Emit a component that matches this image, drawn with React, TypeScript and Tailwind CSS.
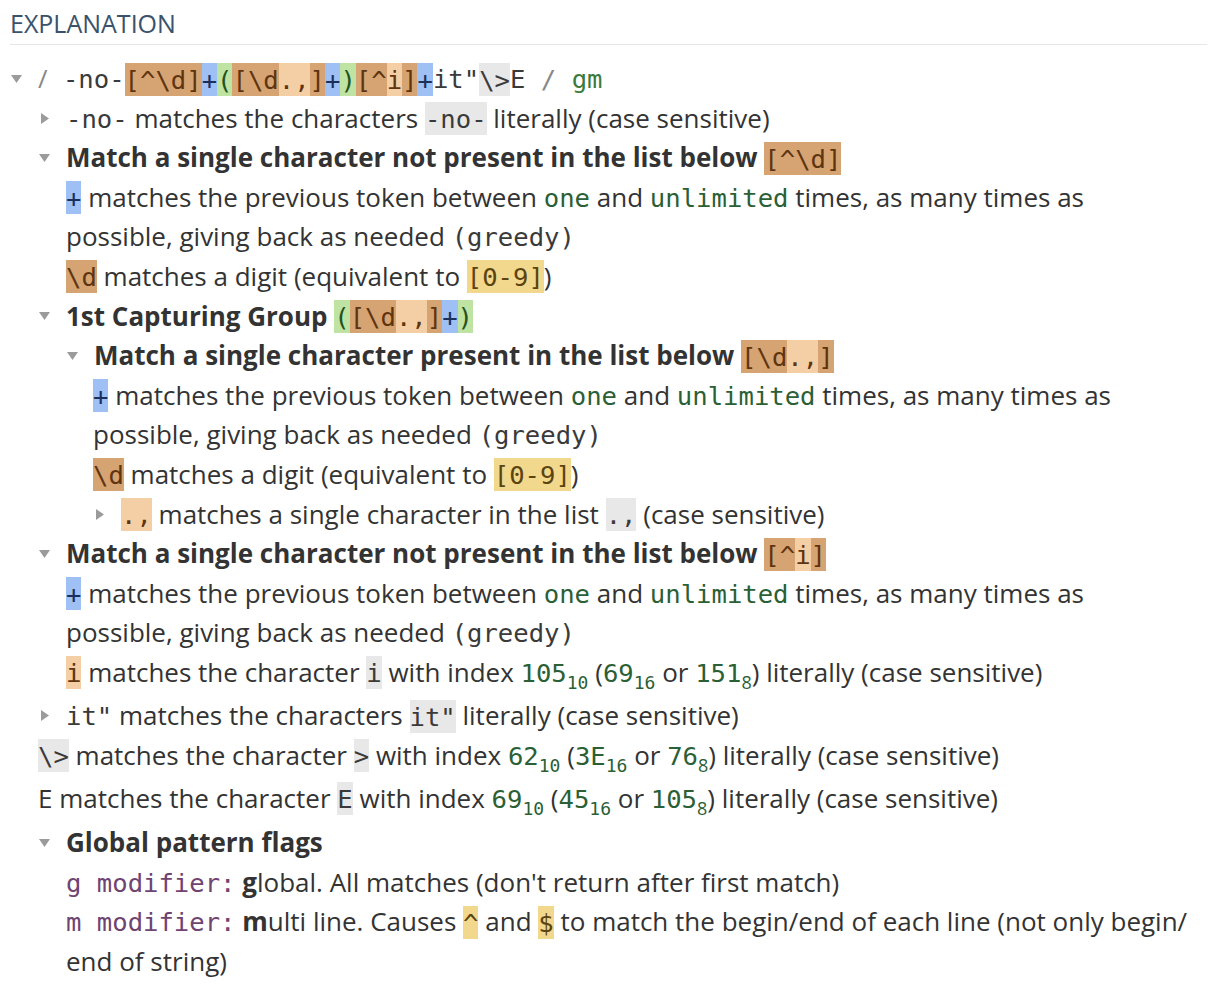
import React from 'react';

const MONO = "font-['DejaVu_Sans_Mono',monospace] text-[25.6px] leading-none";

const TONES = {
  dark: 'bg-[#d6a372] text-[#5e3510]',
  light: 'bg-[#f4cfa6] text-[#5e3510]',
  blue: 'bg-[#9ec0f5] text-[#1a2f5a]',
  green: 'bg-[#bfe3a3] text-[#24521e]',
  yellow: 'bg-[#f2d88d] text-[#5a4410]',
  gray: 'bg-[#e8e8e8] text-[#3a3a3a]',
};

type Tone = keyof typeof TONES;

// highlighted regex token; padding on an inline span paints the box without growing the line
const Tok = ({ k, children }: { k: Tone; children: React.ReactNode }) => (
  <span className={`${MONO} py-[1.5px] ${TONES[k]}`}>{children}</span>
);

const Code = ({ children, className = 'text-[#3a3a3a]' }: { children: React.ReactNode; className?: string }) => (
  <span className={`${MONO} ${className}`}>{children}</span>
);

const Num = ({ v, base, sansBase }: { v: string; base: string; sansBase?: boolean }) => (
  <>
    <Code className="text-[#2b5f35]">{v}</Code>
    <sub
      className={`${sansBase ? "font-['Open_Sans',sans-serif]" : "font-['DejaVu_Sans_Mono',monospace]"} text-[18px] text-[#2b5f35] -bottom-[7px]`}
    >
      {base}
    </sub>
  </>
);

const Arrow = ({ open }: { open?: boolean }) => (
  <span className="w-[28px] shrink-0 flex items-center">
    {open ? (
      <svg width="11" height="8" className="ml-[1px]">
        <path d="M0 0H11L5.5 8Z" fill="#9b9b9b" />
      </svg>
    ) : (
      <svg width="8" height="11" className="ml-[3px]">
        <path d="M0 0L8 5.5L0 11Z" fill="#9b9b9b" />
      </svg>
    )}
  </span>
);

const Row = ({ open, children, className = '' }: { open?: boolean; children: React.ReactNode; className?: string }) => (
  <div className={`flex items-center h-[39.6px] whitespace-nowrap ${className}`}>
    <Arrow open={open} />
    <div>{children}</div>
  </div>
);

const Leaf = ({ sub, children }: { sub?: boolean; children: React.ReactNode }) => (
  <div className={`whitespace-nowrap ${sub ? 'pb-[3.5px]' : ''}`}>{children}</div>
);

const Plus = () => (
  <Leaf>
    <Tok k="blue">+</Tok> matches the previous token between <Code className="text-[#2b5f35]">one</Code> and{' '}
    <Code className="text-[#2b5f35]">unlimited</Code> times, as many times as
    <br />
    possible, giving back as needed <Code>(greedy)</Code>
  </Leaf>
);

const Digit = () => (
  <Leaf>
    <Tok k="dark">\d</Tok> matches a digit (equivalent to <Tok k="yellow">[0-9]</Tok>)
  </Leaf>
);

const App = () => {
  return (
    <div className="bg-white w-[1217px] h-[995px] px-[10px] font-['Open_Sans',sans-serif] text-[26px] leading-[39.6px] text-[#333] overflow-hidden">
      <div className="pt-[6px] pb-[4px] leading-[34px] text-[25px] text-[#3a526b] border-b border-[#e6e6e6]">
        EXPLANATION
      </div>

      <div className="pt-[14px]">
        <Row open>
          <span className="text-[#888]">/</span>
          <Code> -no-</Code>
          <Tok k="dark">[^\d]</Tok>
          <Tok k="blue">+</Tok>
          <Tok k="green">(</Tok>
          <Tok k="dark">[\d</Tok>
          <Tok k="light">.,</Tok>
          <Tok k="dark">]</Tok>
          <Tok k="blue">+</Tok>
          <Tok k="green">)</Tok>
          <Tok k="dark">[^</Tok>
          <Tok k="light">i</Tok>
          <Tok k="dark">]</Tok>
          <Tok k="blue">+</Tok>
          <Code>it"</Code>
          <Tok k="gray">\&gt;</Tok>
          <Code>E</Code>
          <Code className="text-[#888] whitespace-pre"> / </Code>
          <Code className="text-[#3b7a3b]">gm</Code>
        </Row>

        <div className="pl-[28px]">
          <Row>
            <Code>-no-</Code> matches the characters <Tok k="gray">-no-</Tok> literally (case sensitive)
          </Row>

          <Row open>
            <b className="font-bold">Match a single character not present in the list below</b>{' '}
            <Tok k="dark">[^\d]</Tok>
          </Row>
          <div className="pl-[28px]">
            <Plus />
            <Digit />
          </div>

          <Row open>
            <b className="font-bold">1st Capturing Group</b> <Tok k="green">(</Tok>
            <Tok k="dark">[\d</Tok>
            <Tok k="light">.,</Tok>
            <Tok k="dark">]</Tok>
            <Tok k="blue">+</Tok>
            <Tok k="green">)</Tok>
          </Row>
          <div className="pl-[28px]">
            <Row open>
              <b className="font-bold">Match a single character present in the list below</b>{' '}
              <Tok k="dark">[\d</Tok>
              <Tok k="light">.,</Tok>
              <Tok k="dark">]</Tok>
            </Row>
            <div className="pl-[27px]">
              <Plus />
              <Digit />
              <Row>
                <Tok k="light">.,</Tok> matches a single character in the list <Tok k="gray">.,</Tok> (case sensitive)
              </Row>
            </div>
          </div>

          <Row open>
            <b className="font-bold">Match a single character not present in the list below</b>{' '}
            <Tok k="dark">[^</Tok>
            <Tok k="light">i</Tok>
            <Tok k="dark">]</Tok>
          </Row>
          <div className="pl-[28px]">
            <Plus />
            <Leaf sub>
              <Tok k="light">i</Tok> matches the character <Tok k="gray">i</Tok> with index <Num v="105" base="10" /> (
              <Num v="69" base="16" /> or <Num v="151" base="8" sansBase />) literally (case sensitive)
            </Leaf>
          </div>

          <Row>
            <Code>it"</Code> matches the characters <Tok k="gray">it"</Tok> literally (case sensitive)
          </Row>

          <Leaf sub>
            <Tok k="gray">\&gt;</Tok> matches the character <Tok k="gray">&gt;</Tok> with index <Num v="62" base="10" /> (
            <Num v="3E" base="16" /> or <Num v="76" base="8" sansBase />) literally (case sensitive)
          </Leaf>
          <Leaf sub>
            E matches the character <Tok k="gray">E</Tok> with index <Num v="69" base="10" /> (
            <Num v="45" base="16" /> or <Num v="105" base="8" sansBase />) literally (case sensitive)
          </Leaf>

          <Row open className="mt-[1.5px]">
            <b className="font-bold">Global pattern flags</b>
          </Row>
          <div className="pl-[28px]">
            <Leaf>
              <Code className="text-[#6f4372]">g modifier:</Code> <b className="font-bold">g</b>lobal. All matches
              (don't return after first match)
            </Leaf>
            <Leaf>
              <Code className="text-[#6f4372]">m modifier:</Code> <b className="font-bold">m</b>ulti line. Causes{' '}
              <Tok k="yellow">^</Tok> and <Tok k="yellow">$</Tok> to match the begin/end of each line (not only begin/
              <br />
              end of string)
            </Leaf>
          </div>
        </div>
      </div>
    </div>
  );
};

export default App;
